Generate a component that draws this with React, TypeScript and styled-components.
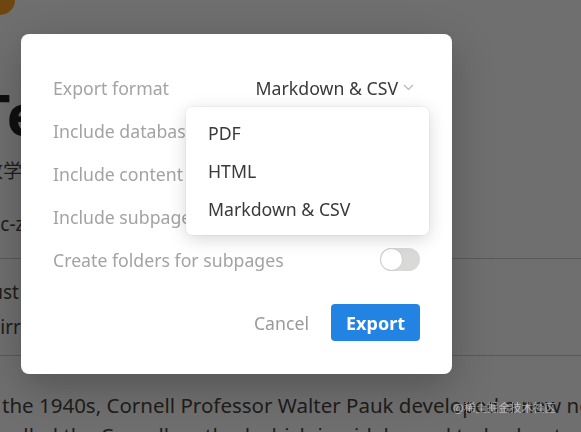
import React from "react";
import styled, { createGlobalStyle } from "styled-components";

const Global = createGlobalStyle`
  html, body { margin: 0; padding: 0; }
  body {
    width: 581px;
    height: 432px;
    overflow: hidden;
    background: #ffffff;
    font-family: "Noto Sans", "Noto Sans CJK SC", sans-serif;
  }
`;

const Page = styled.div`
  position: relative;
  width: 581px;
  height: 432px;
  overflow: hidden;
  background: #ffffff;
  color: #37352f;
`;

const Avatar = styled.div`
  position: absolute;
  left: -15px;
  top: -15px;
  width: 30px;
  height: 30px;
  border-radius: 50%;
  background: #ff9a10;
`;

const Content = styled.div`
  display: flex;
  flex-direction: column;
  padding-top: 82px;
`;

const Title = styled.h1`
  margin: 0 0 0 -23px;
  font-family: "Noto Sans", sans-serif;
  font-size: 58px;
  font-weight: 700;
  line-height: 64px;
  color: #111;
`;

const SubLine = styled.div<{ $top: number; $shift: number }>`
  margin-left: ${(p) => p.$shift}px;
  font-size: 19px;
  line-height: 26px;
  height: 26px;
  padding-top: ${(p) => p.$top}px;
  white-space: nowrap;
`;

const TableBlock = styled.div`
  margin-top: 21px;
  height: 98px;
  box-sizing: border-box;
  border-top: 1px solid #c8c8c8;
  border-bottom: 1px solid #c8c8c8;
  display: flex;
  flex-direction: column;
  justify-content: center;
  gap: 9px;
  padding-top: 4px;
`;

const Cell = styled.div<{ $shift: number }>`
  font-size: 19px;
  line-height: 26px;
  margin-left: ${(p) => p.$shift}px;
  white-space: nowrap;
`;

const Paragraph = styled.p`
  margin: 0;
  padding: 34px 0 0 2px;
  font-size: 20.5px;
  line-height: 30px;
  white-space: nowrap;
  color: #37352f;
`;

const Overlay = styled.div`
  position: fixed;
  inset: 0;
  background: rgba(15, 15, 15, 0.6);
  padding: 34px 0 0 21px;
  box-sizing: border-box;
`;

const Watermark = styled.div`
  position: absolute;
  left: 453px;
  top: 399px;
  font-size: 11.5px;
  color: rgba(255, 255, 255, 0.5);
  font-family: "Noto Sans CJK SC", sans-serif;
  white-space: nowrap;
`;

const Modal = styled.div`
  position: relative;
  width: 431px;
  height: 340px;
  box-sizing: border-box;
  background: #fff;
  border-radius: 8px;
  box-shadow: 0 12px 40px rgba(0, 0, 0, 0.25);
  padding: 32px 32px 33px 32px;
  display: flex;
  flex-direction: column;
  font-family: "Noto Sans", sans-serif;
`;

const Row = styled.div`
  height: 43px;
  display: flex;
  align-items: center;
  justify-content: space-between;
`;

const Label = styled.span`
  font-size: 17.7px;
  color: #a3a3a3;
  white-space: nowrap;
`;

const SelectWrap = styled.div`
  position: relative;
  display: flex;
  align-items: center;
  gap: 5px;
  margin-right: 6px;
`;

const SelectValue = styled.span`
  font-size: 17.7px;
  color: #3a3a3a;
`;

const Menu = styled.div`
  position: absolute;
  top: 31px;
  right: -15px;
  width: 243px;
  box-sizing: border-box;
  background: #fff;
  border-radius: 6px;
  box-shadow: 0 4px 18px rgba(0, 0, 0, 0.16), 0 0 0 1px rgba(0, 0, 0, 0.03);
  padding: 7px 0;
  z-index: 2;
`;

const MenuItem = styled.div`
  height: 38px;
  display: flex;
  align-items: center;
  padding-left: 22px;
  font-size: 17.7px;
  color: #3a3a3a;
`;

const Toggle = styled.div`
  width: 40px;
  height: 23px;
  border-radius: 12px;
  background: #d9d9d7;
  display: flex;
  align-items: center;
  padding: 1px;
  box-sizing: border-box;
`;

const Knob = styled.div`
  width: 21px;
  height: 21px;
  border-radius: 50%;
  background: #fff;
  box-shadow: 0 0 0 1px #d0d0ce;
`;

const Footer = styled.div`
  margin-top: auto;
  display: flex;
  justify-content: flex-end;
  align-items: center;
  gap: 22px;
`;

const CancelButton = styled.button`
  border: none;
  background: none;
  padding: 0;
  font-family: inherit;
  font-size: 17.7px;
  color: #9a9a9a;
`;

const ExportButton = styled.button`
  width: 89px;
  height: 37px;
  border: none;
  border-radius: 4px;
  background: #2383e2;
  color: #fff;
  font-family: inherit;
  font-size: 18px;
  font-weight: 700;
`;

const Chevron = () => (
  <svg width="11" height="7" viewBox="0 0 11 7" fill="none">
    <path d="M1 1l4.5 4.5L10 1" stroke="#b5b5b5" strokeWidth="1.2" />
  </svg>
);

export default function App() {
  return (
    <>
      <Global />
      <Page>
        <Avatar />
        <Content>
          <Title>Test</Title>
          <SubLine $top={12} $shift={-16}>数学</SubLine>
          <SubLine $top={27} $shift={-22}>abc-zz</SubLine>
          <TableBlock>
            <Cell $shift={-14}>Just</Cell>
            <Cell $shift={-17}>Mirror</Cell>
          </TableBlock>
          <Paragraph>
            the 1940s, Cornell Professor Walter Pauk developed a new note-taking method
            <br />
            called the Cornell method which is widely used today by students
          </Paragraph>
        </Content>
        <Overlay>
          <Modal>
            <Row>
              <Label>Export format</Label>
              <SelectWrap>
                <SelectValue>Markdown &amp; CSV</SelectValue>
                <Chevron />
                <Menu>
                  <MenuItem>PDF</MenuItem>
                  <MenuItem>HTML</MenuItem>
                  <MenuItem>Markdown &amp; CSV</MenuItem>
                </Menu>
              </SelectWrap>
            </Row>
            <Row>
              <Label>Include databases</Label>
            </Row>
            <Row>
              <Label>Include content</Label>
            </Row>
            <Row>
              <Label>Include subpages</Label>
            </Row>
            <Row>
              <Label>Create folders for subpages</Label>
              <Toggle>
                <Knob />
              </Toggle>
            </Row>
            <Footer>
              <CancelButton>Cancel</CancelButton>
              <ExportButton>Export</ExportButton>
            </Footer>
          </Modal>
          <Watermark>@稀土掘金技术社区</Watermark>
        </Overlay>
      </Page>
    </>
  );
}
